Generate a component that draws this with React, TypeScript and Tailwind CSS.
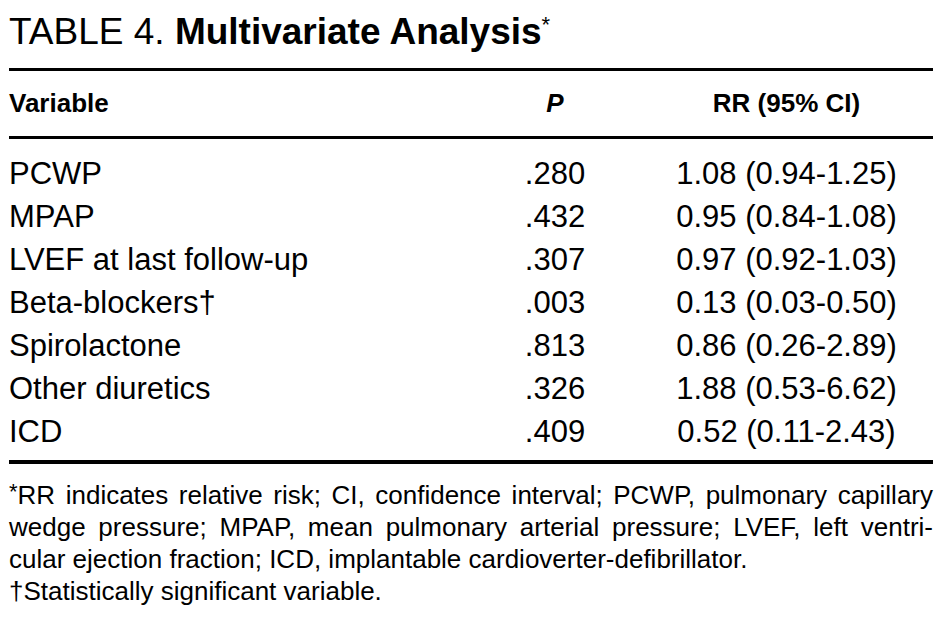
const rows = [
  { name: "PCWP", p: ".280", rr: "1.08 (0.94-1.25)" },
  { name: "MPAP", p: ".432", rr: "0.95 (0.84-1.08)" },
  { name: "LVEF at last follow-up", p: ".307", rr: "0.97 (0.92-1.03)" },
  { name: "Beta-blockers†", p: ".003", rr: "0.13 (0.03-0.50)" },
  { name: "Spirolactone", p: ".813", rr: "0.86 (0.26-2.89)" },
  { name: "Other diuretics", p: ".326", rr: "1.88 (0.53-6.62)" },
  { name: "ICD", p: ".409", rr: "0.52 (0.11-2.43)" },
];

export default function App() {
  return (
    <div className="min-h-[626px] w-[947px] bg-white font-['Liberation_Sans',Arial,sans-serif] text-black">
      <div className="ml-[9px] w-[924px] pt-[12px]">
        {/* Title */}
        <h1 className="text-[37px] leading-[40px]">
          TABLE 4. <span className="font-bold">Multivariate Analysis</span>
          <span className="relative top-[-12px] text-[22px] leading-none">*</span>
        </h1>

        {/* Table */}
        <div className="mt-[16px] border-t-[3px] border-black">
          <div className="grid h-[65px] grid-cols-[461px_170px_1fr] items-center text-[26px] font-bold">
            <div>Variable</div>
            <div className="text-center italic">P</div>
            <div className="text-center">RR (95% CI)</div>
          </div>
          <div className="border-t-[3px] border-black pt-[13px] pb-[7px] text-[31px] leading-[43px]">
            {rows.map((r) => (
              <div key={r.name} className="grid grid-cols-[461px_170px_1fr]">
                <div>{r.name}</div>
                <div className="text-center">{r.p}</div>
                <div className="text-center">{r.rr}</div>
              </div>
            ))}
          </div>
          <div className="border-t-[4px] border-black" />

          {/* Footnotes */}
          <div className="pt-[15px] text-[26px] leading-[32px]">
            <p className="text-justify [text-align-last:justify]">
              <span className="relative top-[-5px] text-[22px] leading-none">*</span>RR indicates relative risk; CI, confidence interval; PCWP, pulmonary capillary
            </p>
            <p className="text-justify [text-align-last:justify]">
              wedge pressure; MPAP, mean pulmonary arterial pressure; LVEF, left ventri-
            </p>
            <p>cular ejection fraction; ICD, implantable cardioverter-defibrillator.</p>
            <p>†Statistically significant variable.</p>
          </div>
        </div>
      </div>
    </div>
  );
}
